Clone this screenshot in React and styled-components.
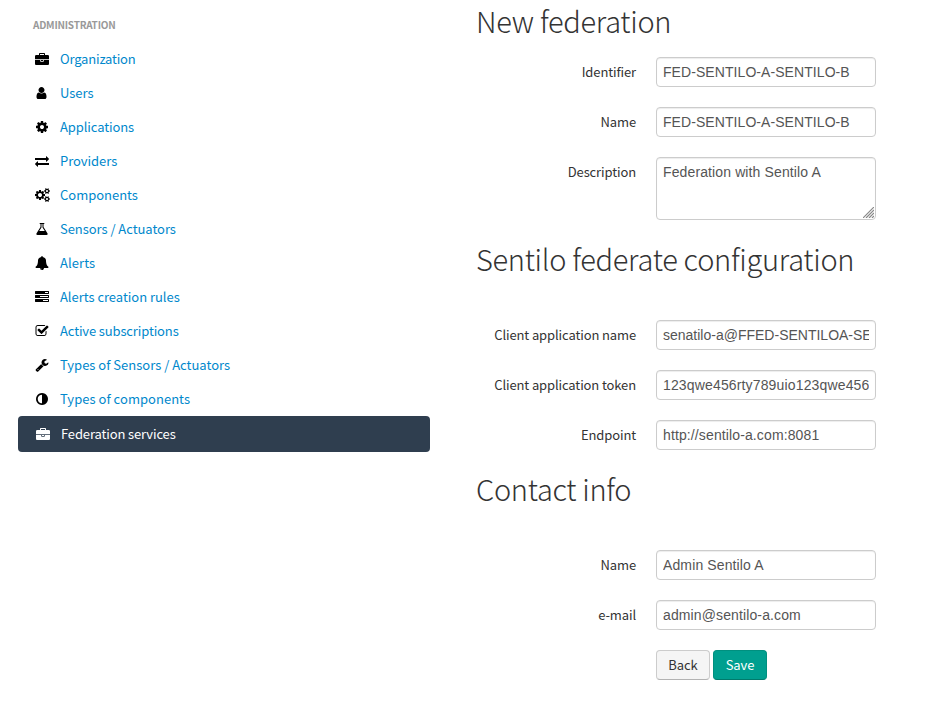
import React from "react";
import styled, { createGlobalStyle, css } from "styled-components";

const GlobalStyle = createGlobalStyle`
  * { box-sizing: border-box; }
  body {
    margin: 0;
    background: #fff;
    color: #333;
    font-family: "Noto Sans CJK JP", "Open Sans", sans-serif;
    font-size: 13px;
    line-height: 20px;
  }
`;

const Page = styled.div`
  display: flex;
  width: 938px;
  height: 720px;
  overflow: hidden;
`;

const Sidebar = styled.nav`
  width: 412px;
  margin-left: 18px;
  padding-top: 15px;
`;

const SidebarTitle = styled.h3`
  margin: 0 0 7px;
  padding-left: 15px;
  height: 20px;
  color: #999;
  font-size: 10px;
  font-weight: 700;
  letter-spacing: -0.22px;
  line-height: 20px;
`;

const Menu = styled.ul`
  list-style: none;
  margin: 0;
  padding: 0;
`;

const MenuLink = styled.a`
  display: flex;
  align-items: center;
  height: 34px;
  padding-left: 15px;
  color: #0088cc;
  text-decoration: none;
  cursor: pointer;
  ${(p) =>
    p.$active &&
    css`
      height: 36px;
      padding-left: 16px;
      border-radius: 4px;
      background: #2f3e4f;
      color: #fff;
    `}
`;

const MenuIcon = styled.svg`
  flex: none;
  width: ${(p) => p.$width}px;
  height: 14px;
  margin: 0 ${(p) => (18 - p.$width) / 2}px;
  margin-right: ${(p) => 9 + (18 - p.$width) / 2}px;
  fill: ${(p) => (p.$active ? "#fff" : "#000")};
`;

const MenuText = styled.span`
  font-size: 13px;
  letter-spacing: ${(p) => p.$tracking}px;
  white-space: nowrap;
`;

const Form = styled.form`
  width: 400px;
  margin-left: 46px;
`;

const Title = styled.h1`
  margin: ${(p) => p.$top}px 0 ${(p) => p.$gap}px;
  height: 40px;
  font-size: 29px;
  font-weight: 200;
  letter-spacing: -0.3px;
  line-height: 40px;
  white-space: nowrap;
`;

const Field = styled.label`
  display: flex;
  margin-bottom: 20px;
`;

const LabelText = styled.span`
  width: 160px;
  margin-right: 20px;
  padding-top: 5px;
  letter-spacing: -0.12px;
  text-align: right;
`;

const control = css`
  display: block;
  width: 220px;
  margin: 0;
  padding: 4px 6px;
  border: 1px solid #ccc;
  border-radius: 4px;
  outline: 0;
  background: #fff;
  box-shadow: inset 0 1px 1px rgba(0, 0, 0, 0.075);
  color: #555;
  font: 14px/20px "Liberation Sans", Arial, sans-serif;
  letter-spacing: ${(p) => p.$tracking ?? 0.12}px;
`;

const Input = styled.input`
  ${control}
  height: 30px;
`;

const AreaFrame = styled.span`
  position: relative;
  display: block;
  height: 63px;
`;

const TextArea = styled.textarea`
  ${control}
  height: 63px;
  resize: none;
  overflow: hidden;
`;

const Grip = styled.svg`
  position: absolute;
  right: 2px;
  bottom: 2px;
  width: 11px;
  height: 11px;
  stroke: #888;
  stroke-width: 1.2;
`;

const Actions = styled.div`
  display: flex;
  gap: 3px;
  margin-left: 180px;
`;

const Button = styled.button`
  width: 54px;
  height: 30px;
  padding: 0;
  border: 1px solid ${(p) => (p.$primary ? "#00907f" : "#ccc")};
  border-bottom-color: ${(p) => (p.$primary ? "#007a6c" : "#b3b3b3")};
  border-radius: 4px;
  background: ${(p) => (p.$primary ? "#009f8f" : "#f5f5f5")};
  color: ${(p) => (p.$primary ? "#fff" : "#333")};
  font: inherit;
  letter-spacing: -0.1px;
`;

const ICONS = {
  briefcase:
    "M640 384h512v-128h-512v128zm1152 640v480q0 66-47 113t-113 47h-1472q-66 0-113-47t-47-113v-480h672v160q0 26 19 45t45 19h320q26 0 45-19t19-45v-160h672zm-768 0v128h-256v-128h256zm768-480v384h-1792v-384q0-66 47-113t113-47h352v-160q0-40 28-68t68-28h576q40 0 68 28t28 68v160h352q66 0 113 47t47 113z",
  user: "M1536 1399q0 109-62.5 187t-150.5 78h-854q-88 0-150.5-78t-62.5-187q0-85 8.5-160.5t31.5-152 58.5-131 94-89 134.5-34.5q131 128 313 128t313-128q76 0 134.5 34.5t94 89 58.5 131 31.5 152 8.5 160.5zm-256-887q0 159-112.5 271.5t-271.5 112.5-271.5-112.5-112.5-271.5 112.5-271.5 271.5-112.5 271.5 112.5 112.5 271.5z",
  cog: "M1152 896q0-106-75-181t-181-75-181 75-75 181 75 181 181 75 181-75 75-181zm512-109v222q0 12-8 23t-20 13l-185 28q-19 54-39 91 35 50 107 138 10 12 10 25t-9 23q-27 37-99 108t-94 71q-12 0-26-9l-138-108q-44 23-91 38-16 136-29 186-7 28-36 28h-222q-14 0-24.5-8.5t-11.5-21.5l-28-184q-49-16-90-37l-141 107q-10 9-25 9-14 0-25-11-126-114-165-168-7-10-7-23 0-12 8-23 15-21 51-66.5t54-70.5q-27-50-41-99l-183-27q-13-2-21-12.5t-8-23.5v-222q0-12 8-23t19-13l186-28q14-46 39-92-40-57-107-138-10-12-10-24 0-10 9-23 26-36 98.5-107.5t94.5-71.5q13 0 26 10l138 107q44-23 91-38 16-136 29-186 7-28 36-28h222q14 0 24.5 8.5t11.5 21.5l28 184q49 16 90 37l142-107q9-9 24-9 13 0 25 10 129 119 165 170 7 8 7 22 0 12-8 23-15 21-51 66.5t-54 70.5q26 50 41 98l183 28q13 2 21 12.5t8 23.5z",
  exchange:
    "M1792 1184v192q0 13-9.5 22.5t-22.5 9.5h-1376v192q0 13-9.5 22.5t-22.5 9.5q-12 0-24-10l-319-320q-9-9-9-22 0-14 9-23l320-320q9-9 23-9 13 0 22.5 9.5t9.5 22.5v192h1376q13 0 22.5 9.5t9.5 22.5zm0-544q0 14-9 23l-320 320q-9 9-23 9-13 0-22.5-9.5t-9.5-22.5v-192h-1376q-13 0-22.5-9.5t-9.5-22.5v-192q0-13 9.5-22.5t22.5-9.5h1376v-192q0-14 9-23t23-9q12 0 24 10l319 319q9 9 9 23z",
  cogs: "M896 896q0-106-75-181t-181-75-181 75-75 181 75 181 181 75 181-75 75-181zm768 512q0-52-38-90t-90-38-90 38-38 90q0 53 37.5 90.5t90.5 37.5 90.5-37.5 37.5-90.5zm0-1024q0-52-38-90t-90-38-90 38-38 90q0 53 37.5 90.5t90.5 37.5 90.5-37.5 37.5-90.5zm-384 421v185q0 10-7 19.5t-16 10.5l-155 24q-11 35-32 76 34 48 90 115 7 11 7 20 0 12-7 19-23 30-82.5 89.5t-78.5 59.5q-11 0-21-7l-115-90q-37 19-77 31-11 108-23 155-7 24-30 24h-186q-11 0-20-7.5t-10-17.5l-23-153q-34-10-75-31l-118 89q-7 7-20 7-11 0-21-8-144-133-144-160 0-9 7-19 10-14 41-53t47-61q-23-44-35-82l-152-24q-10-1-17-9.5t-7-19.5v-185q0-10 7-19.5t16-10.5l155-24q11-35 32-76-34-48-90-115-7-11-7-20 0-12 7-20 22-30 82-89t79-59q11 0 21 7l115 90q34-18 77-32 11-108 23-154 7-24 30-24h186q11 0 20 7.5t10 17.5l23 153q34 10 75 31l118-89q8-7 20-7 11 0 21 8 144 133 144 160 0 8-7 19-12 16-42 54t-45 60q23 48 34 82l152 23q10 2 17 10.5t7 19.5zm640 533v140q0 16-149 31-12 27-30 52 51 113 51 138 0 4-4 7-122 71-124 71-8 0-46-47t-52-68q-20 2-30 2t-30-2q-14 21-52 68t-46 47q-2 0-124-71-4-3-4-7 0-25 51-138-18-25-30-52-149-15-149-31v-140q0-16 149-31 13-29 30-52-51-113-51-138 0-4 4-7 4-2 35-20t59-34 30-16q8 0 46 46.5t52 67.5q20-2 30-2t30 2q51-71 92-112l6-2q4 0 124 70 4 3 4 7 0 25-51 138 17 23 30 52 149 15 149 31zm0-1024v140q0 16-149 31-12 27-30 52 51 113 51 138 0 4-4 7-122 71-124 71-8 0-46-47t-52-68q-20 2-30 2t-30-2q-14 21-52 68t-46 47q-2 0-124-71-4-3-4-7 0-25 51-138-18-25-30-52-149-15-149-31v-140q0-16 149-31 13-29 30-52-51-113-51-138 0-4 4-7 4-2 35-20t59-34 30-16q8 0 46 46.5t52 67.5q20-2 30-2t30 2q51-71 92-112l6-2q4 0 124 70 4 3 4 7 0 25-51 138 17 23 30 52 149 15 149 31z",
  flask:
    "M1591 1448q56 89 21.5 152.5t-140.5 63.5h-1152q-106 0-140.5-63.5t21.5-152.5l503-793v-399h-64q-26 0-45-19t-19-45 19-45 45-19h512q26 0 45 19t19 45-19 45-45 19h-64v399zm-779-725l-272 429h712l-272-429-20-31v-436h-128v436z",
  bell: "M912 1696q0-16-16-16-59 0-101.5-42.5t-42.5-101.5q0-16-16-16t-16 16q0 73 51.5 124.5t124.5 51.5q16 0 16-16zm816-288q0 52-38 90t-90 38h-448q0 106-75 181t-181 75-181-75-75-181h-448q-52 0-90-38t-38-90q50-42 91-88t85-119.5 74.5-158.5 50-206 19.5-260q0-152 117-282.5t307-158.5q-8-19-8-39 0-40 28-68t68-28 68 28 28 68q0 20-8 39 190 28 307 158.5t117 282.5q0 139 19.5 260t50 206 74.5 158.5 85 119.5 91 88z",
  tasks:
    "M1024 1408h640v-128h-640v128zm-384-512h1024v-128h-1024v128zm640-512h384v-128h-384v128zm512 832v256q0 26-19 45t-45 19h-1664q-26 0-45-19t-19-45v-256q0-26 19-45t45-19h1664q26 0 45 19t19 45zm0-512v256q0 26-19 45t-45 19h-1664q-26 0-45-19t-19-45v-256q0-26 19-45t45-19h1664q26 0 45 19t19 45zm0-512v256q0 26-19 45t-45 19h-1664q-26 0-45-19t-19-45v-256q0-26 19-45t45-19h1664q26 0 45 19t19 45z",
  check:
    "M1472 930v318q0 119-84.5 203.5t-203.5 84.5h-832q-119 0-203.5-84.5t-84.5-203.5v-832q0-119 84.5-203.5t203.5-84.5h832q63 0 117 25 15 7 18 23 3 17-9 29l-49 49q-10 10-23 10-3 0-9-2-23-6-45-6h-832q-66 0-113 47t-47 113v832q0 66 47 113t113 47h832q66 0 113-47t47-113v-254q0-13 9-22l64-64q10-10 23-10 6 0 12 3 20 8 20 29zm231-489l-814 814q-24 24-57 24t-57-24l-430-430q-24-24-24-57t24-57l110-110q24-24 57-24t57 24l263 263 647-647q24-24 57-24t57 24l110 110q24 24 24 57t-24 57z",
  wrench:
    "M448 1472q0-26-19-45t-45-19-45 19-19 45 19 45 45 19 45-19 19-45zm644-420l-682 682q-37 37-90 37-52 0-91-37l-106-108q-38-36-38-90 0-53 38-91l681-681q39 98 114.5 173.5t173.5 114.5zm634-435q0 39-23 106-47 134-164.5 217.5t-258.5 83.5q-185 0-316.5-131.5t-131.5-316.5 131.5-316.5 316.5-131.5q58 0 121.5 16.5t107.5 46.5q16 11 16 28t-16 28l-293 169v224l193 107q5-3 79-48.5t135.5-81 70.5-35.5q15 0 23.5 10t8.5 25z",
  adjust:
    "M896 1440v-1088q-148 0-273 73t-198 198-73 273 73 273 198 198 273 73zm768-544q0 209-103 385.5t-279.5 279.5-385.5 103-385.5-103-279.5-279.5-103-385.5 103-385.5 279.5-279.5 385.5-103 385.5 103 279.5 279.5 103 385.5z",
};

// View boxes for icons that differ from the regular 1792-unit square.
const VIEW_BOXES = {
  cogs: "0 0 1920 1792",
  user: "64 0 1792 1792",
};

const MENU = [
  { icon: "briefcase", label: "Organization", tracking: -0.18 },
  { icon: "user", label: "Users", tracking: -0.05 },
  { icon: "cog", label: "Applications", tracking: -0.1 },
  { icon: "exchange", label: "Providers", tracking: -0.04 },
  { icon: "cogs", label: "Components", tracking: -0.02 },
  { icon: "flask", label: "Sensors / Actuators", tracking: -0.05 },
  { icon: "bell", label: "Alerts", tracking: 0.1 },
  { icon: "tasks", label: "Alerts creation rules", tracking: -0.03 },
  { icon: "check", label: "Active subscriptions", tracking: -0.13 },
  { icon: "wrench", label: "Types of Sensors / Actuators", tracking: 0 },
  { icon: "adjust", label: "Types of components", tracking: 0.03 },
  { icon: "briefcase", label: "Federation services", tracking: -0.13, active: true },
];

function MenuItem({ icon, label, tracking, active }) {
  return (
    <li>
      <MenuLink $active={active}>
        <MenuIcon
          $width={icon === "cogs" ? 15 : 14}
          $active={active}
          viewBox={VIEW_BOXES[icon] ?? "0 0 1792 1792"}
        >
          <path d={ICONS[icon]} />
        </MenuIcon>
        <MenuText $tracking={tracking}>{label}</MenuText>
      </MenuLink>
    </li>
  );
}

function TextField({ label, value, tracking }) {
  return (
    <Field>
      <LabelText>{label}</LabelText>
      <Input type="text" defaultValue={value} spellCheck={false} $tracking={tracking} />
    </Field>
  );
}

export default function App() {
  return (
    <Page>
      <GlobalStyle />
      <Sidebar>
        <SidebarTitle>ADMINISTRATION</SidebarTitle>
        <Menu>
          {MENU.map((item) => (
            <MenuItem key={item.label} {...item} />
          ))}
        </Menu>
      </Sidebar>
      <Form>
        <Title $top={0} $gap={17}>
          New federation
        </Title>
        <TextField label="Identifier" value="FED-SENTILO-A-SENTILO-B" tracking={0.07} />
        <TextField label="Name" value="FED-SENTILO-A-SENTILO-B" tracking={0.07} />
        <Field>
          <LabelText>Description</LabelText>
          <AreaFrame>
            <TextArea defaultValue="Federation with Sentilo A" spellCheck={false} />
            <Grip viewBox="0 0 11 11">
              <path d="M0 11L11 0M3 11L11 3M6 11L11 6M9 11L11 9" />
            </Grip>
          </AreaFrame>
        </Field>
        <Title $top={-2} $gap={42}>
          Sentilo federate configuration
        </Title>
        <TextField
          label="Client application name"
          value="senatilo-a@FFED-SENTILOA-SENTILOB"
          tracking={0}
        />
        <TextField
          label="Client application token"
          value="123qwe456rty789uio123qwe456rty789uio"
          tracking={0.15}
        />
        <TextField label="Endpoint" value="http://sentilo-a.com:8081" />
        <Title $top={-2} $gap={42}>
          Contact info
        </Title>
        <TextField label="Name" value="Admin Sentilo A" />
        <TextField label="e-mail" value="admin@sentilo-a.com" />
        <Actions>
          <Button type="button">Back</Button>
          <Button type="button" $primary>
            Save
          </Button>
        </Actions>
      </Form>
    </Page>
  );
}
